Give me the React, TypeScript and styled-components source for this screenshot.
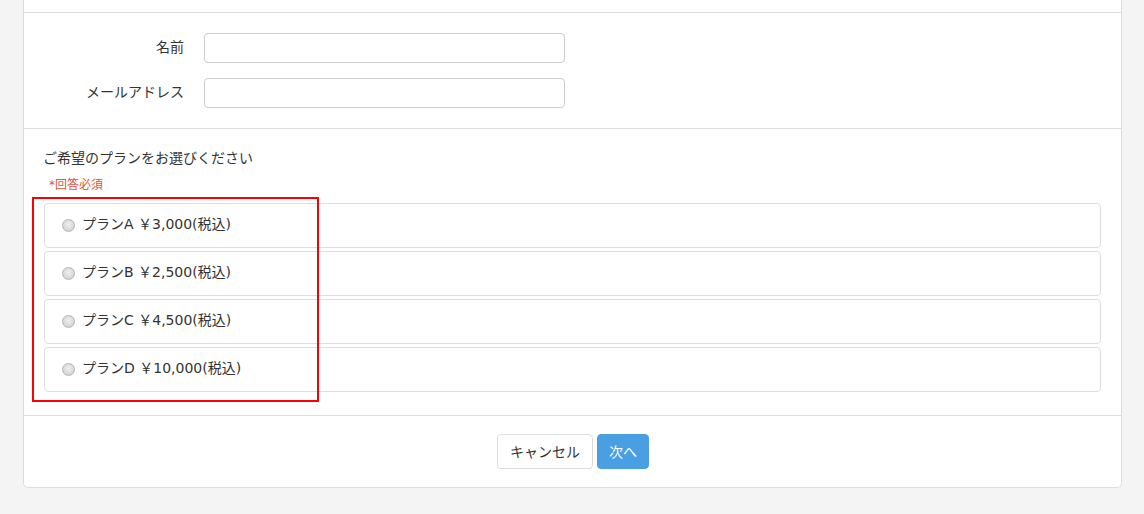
import React from "react";
import styled, { createGlobalStyle } from "styled-components";

const Global = createGlobalStyle`
  html, body { margin: 0; padding: 0; background: #f4f4f4; }
  body { font-family: "DejaVu Sans", "Noto Sans CJK JP", sans-serif; color: #333; font-size: 14px; }
  * { box-sizing: border-box; }
`;

const Page = styled.div`
  padding: 0 22px 0 23px;
  height: 514px;
`;

const Card = styled.div`
  background: #fff;
  border: 1px solid #ddd;
  border-top: 0;
  border-radius: 0 0 5px 5px;
`;

const Section = styled.div<{ $pt: number; $pb: number; $last?: boolean }>`
  position: relative;
  padding: ${(p) => p.$pt}px 20px ${(p) => p.$pb}px;
  border-bottom: ${(p) => (p.$last ? "0" : "1px solid #ddd")};
`;

const TopStrip = styled.div`
  height: 13px;
  border-bottom: 1px solid #ddd;
`;

const FormGrid = styled.div`
  display: grid;
  grid-template-columns: 160px 361px;
  column-gap: 20px;
  row-gap: 15px;
  margin-left: -20px;
`;

const Label = styled.label`
  text-align: right;
  line-height: 28px;
  font-size: 14px;
`;

const Input = styled.input`
  height: 30px;
  border: 1px solid #ccc;
  border-radius: 4px;
  padding: 0 8px;
  font: inherit;
`;

const Title = styled.div`
  font-size: 14px;
  line-height: 20px;
  margin-left: -1px;
`;

const Required = styled.div`
  color: #e0553b;
  font-size: 12px;
  line-height: 18px;
  margin: 8px 0 9px 5px;
`;

const Options = styled.div`
  display: flex;
  flex-direction: column;
  gap: 3px;
`;

const Option = styled.label`
  display: flex;
  align-items: center;
  gap: 7px;
  height: 45px;
  padding: 0 17px;
  border: 1px solid #ddd;
  border-radius: 4px;
  font-size: 14px;
`;

const OptionText = styled.span`
  line-height: 20px;
  margin-bottom: 3px;
`;

const Radio = styled.span`
  width: 13px;
  height: 13px;
  flex: none;
  border-radius: 50%;
  border: 1px solid #b5b5b5;
  background: radial-gradient(circle at 50% 40%, #eee 0%, #d6d6d6 70%, #c9c9c9 100%);
`;

const Highlight = styled.div`
  position: absolute;
  left: 8px;
  top: 68px;
  width: 287px;
  height: 205px;
  border: 2px solid #f00;
  pointer-events: none;
`;

const Actions = styled.div`
  display: flex;
  justify-content: center;
  gap: 4px;
  margin-left: 1px;
`;

const Button = styled.button<{ $primary?: boolean }>`
  height: 35px;
  padding: 0 ${(p) => (p.$primary ? 11 : 12)}px 2px;
  font-family: "Noto Sans CJK JP", sans-serif;
  font-size: 14px;
  border-radius: 4px;
  border: 1px solid ${(p) => (p.$primary ? "#4a9fe3" : "#ddd")};
  background: ${(p) => (p.$primary ? "#4a9fe3" : "#fff")};
  color: ${(p) => (p.$primary ? "#fff" : "#333")};
`;

const plans = [
  "プランA ￥3,000(税込)",
  "プランB ￥2,500(税込)",
  "プランC ￥4,500(税込)",
  "プランD ￥10,000(税込)",
];

export default function App() {
  return (
    <>
      <Global />
      <Page>
        <Card>
          <TopStrip />
          <Section $pt={20} $pb={20}>
            <FormGrid>
              <Label>名前</Label>
              <Input />
              <Label>メールアドレス</Label>
              <Input />
            </FormGrid>
          </Section>
          <Section $pt={19} $pb={23}>
            <Title>ご希望のプランをお選びください</Title>
            <Required>*回答必須</Required>
            <Options>
              {plans.map((p) => (
                <Option key={p}>
                  <Radio />
                  <OptionText>{p}</OptionText>
                </Option>
              ))}
            </Options>
            <Highlight />
          </Section>
          <Section $pt={18} $pb={18} $last>
            <Actions>
              <Button>キャンセル</Button>
              <Button $primary>次へ</Button>
            </Actions>
          </Section>
        </Card>
      </Page>
    </>
  );
}
